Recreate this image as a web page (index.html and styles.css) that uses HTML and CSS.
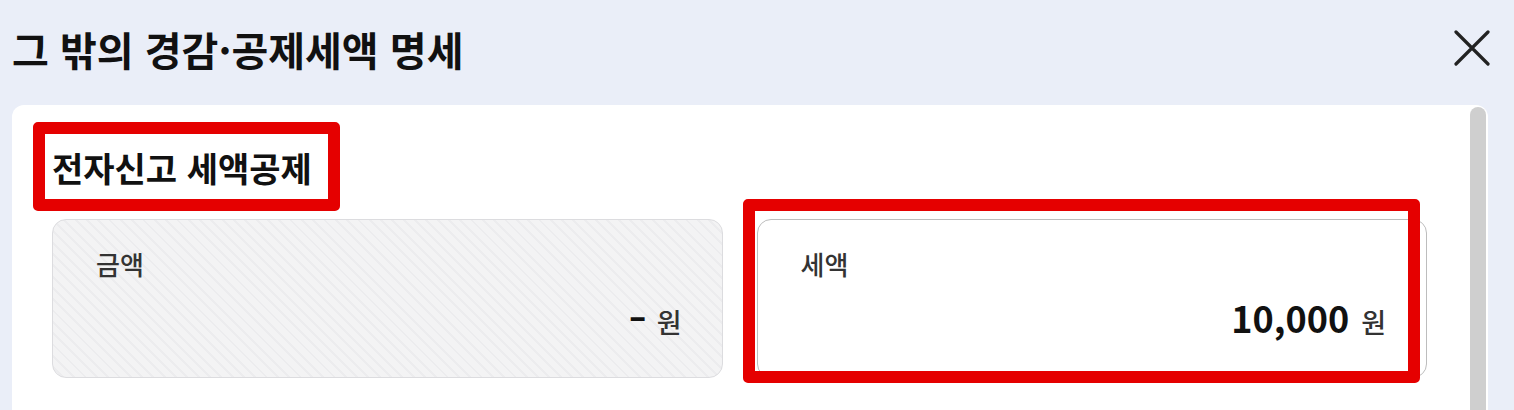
FILE: index.html
```html
<!DOCTYPE html>
<html lang="ko">
<head>
    <meta charset="UTF-8">
    <meta name="viewport" content="width=device-width, initial-scale=1.0">
    <title>그 밖의 경감·공제세액 명세</title>
    <link rel="stylesheet" href="styles.css">
</head>
<body>
    <div class="header">
        <h1 class="title">그 밖의 경감·공제세액 명세</h1>
        <button class="close" aria-label="닫기">
            <svg width="36" height="36" viewBox="0 0 36 36">
                <path d="M2 2 L34 34 M34 2 L2 34" stroke="#222" stroke-width="3.2" stroke-linecap="round" fill="none"/>
            </svg>
        </button>
    </div>

    <div class="card">
        <div class="content">
            <h2 class="section-title">전자신고 세액공제</h2>
            <div class="fields">
                <div class="field disabled">
                    <div class="label">금액</div>
                    <div class="value"><span class="num dash">-</span><span class="unit">원</span></div>
                </div>
                <div class="field">
                    <div class="label">세액</div>
                    <div class="value"><span class="num">10,000</span><span class="unit">원</span></div>
                </div>
            </div>
        </div>
        <div class="scrollbar"></div>
    </div>

    <div class="mark mark-title"></div>
    <div class="mark mark-field"></div>
</body>
</html>
```

FILE: styles.css
```css
body {
    margin: 0;
    background-color: #eaeef8;
    font-family: "Noto Sans CJK KR", "Noto Sans", sans-serif;
    color: #111;
    overflow: hidden;
    height: 410px;
}
.header {
    display: flex;
    justify-content: space-between;
    align-items: center;
    padding: 12px 24px 0 12px;
    height: 73px;
}
.title {
    margin: 0;
    font-size: 40px;
    font-weight: 700;
    line-height: 52px;
}
.close {
    border: none;
    background: none;
    padding: 0;
    width: 36px;
    height: 36px;
    margin-top: -2px;
}
.card {
    display: flex;
    margin: 20px 26px 0 12px;
    height: 400px;
    background: #fff;
    border-radius: 12px 12px 0 0;
}
.content {
    flex: 1;
    padding: 42px 43px 0 40px;
}
.section-title {
    margin: 0;
    font-size: 34px;
    font-weight: 700;
    line-height: 42px;
}
.fields {
    display: grid;
    grid-template-columns: 1fr 1fr;
    gap: 34px;
    margin-top: 30px;
}
.field {
    height: 157px;
    border: 1px solid #bdbdbd;
    border-radius: 14px;
    padding: 0 40px 0 43px;
    display: flex;
    flex-direction: column;
    background: #fff;
}
.field.disabled {
    border-color: #dcdcdf;
    background: repeating-linear-gradient(45deg, #f3f3f4 0, #f3f3f4 6px, #ececee 6px, #ececee 8px);
}
.label {
    margin-top: 26px;
    font-size: 26px;
    font-weight: 500;
    color: #333;
    line-height: 36px;
}
.value {
    margin-top: 11px;
    text-align: right;
    line-height: 48px;
}
.num {
    font-size: 36px;
    font-weight: 700;
    color: #111;
}
.dash {
    display: inline-block;
    transform: scaleX(1.4);
}
.unit {
    margin-left: 12px;
    font-size: 27px;
    font-weight: 500;
    color: #333;
}
.scrollbar {
    width: 16px;
    margin: 2px 2px 0 0;
    background: #cfcfcf;
    border-radius: 8px 8px 0 0;
}
.mark {
    position: absolute;
    border: 12px solid #e50000;
    border-radius: 5px;
}
.mark-title {
    left: 33px;
    top: 122px;
    width: 283px;
    height: 65px;
}
.mark-field {
    left: 743px;
    top: 199px;
    width: 653px;
    height: 160px;
}
```
